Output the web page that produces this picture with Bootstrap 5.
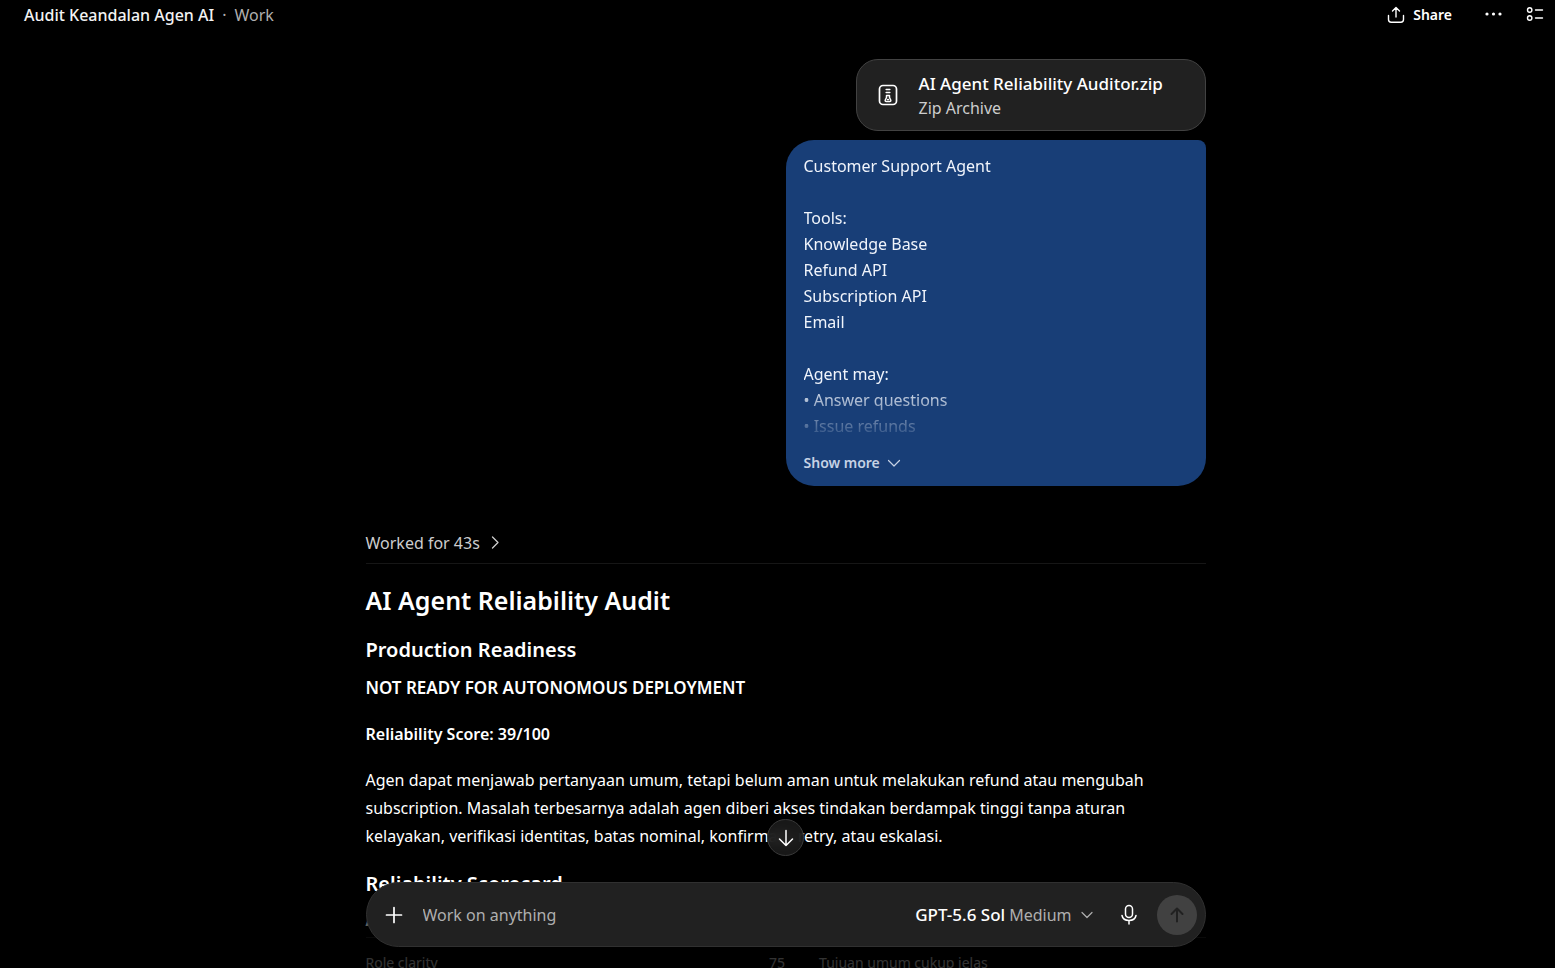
<!DOCTYPE html>
<html lang="id" data-bs-theme="dark">
<head>
<meta charset="utf-8">
<meta name="viewport" content="width=device-width, initial-scale=1">
<title>Audit Keandalan Agen AI</title>
<link href="https://cdn.jsdelivr.net/npm/bootstrap@5.3.0/dist/css/bootstrap.min.css" rel="stylesheet">
<style>
  body { background: #000; color: #fff; font-family: "Noto Sans", "Open Sans", sans-serif; font-size: 16px; line-height: 26px; }
  svg { display: block; flex: none; fill: none; stroke: currentColor; stroke-linecap: round; stroke-linejoin: round; }
  button { color: inherit; }
  .plain { background: none; border: 0; padding: 0; color: inherit; }
  .dots { fill: currentColor; stroke: none; }
  .topbar { height: 30px; padding: 0 11px 0 24px; }
  .chat-title { font-weight: 500; color: #f3f3f3; }
  .muted { color: #afafaf; }
  .share { font-size: 14px; font-weight: 600; }
  .thread { width: 100%; max-width: 840px; padding-top: 29px; }
  .stage { padding-left: 16px; }
  .file-card { width: 350px; height: 72px; background: #212121; border: 1px solid #424242; border-radius: 22px; padding: 2px 19px 0; gap: 19px; line-height: 25px; }
  .file-name { font-size: 17px; font-weight: 500; }
  .file-kind { color: #cdcdcd; }
  .bubble { background: #183e77; color: #f0f4fb; border-radius: 28px 8px 28px 28px; padding: 13px 18px 10px; margin-top: 9px; }
  .bubble-text { height: 286px; overflow: hidden; white-space: pre-line; -webkit-mask-image: linear-gradient(#000 230px, transparent 290px); mask-image: linear-gradient(#000 230px, transparent 290px); }
  .more { font-size: 14px; font-weight: 600; color: #c6d2e5; margin-top: 11px; gap: 6px; }
  .worked { margin-top: 44px; padding-bottom: 7px; border-bottom: 1px solid #161616; color: #cdcdcd; }
  .worked button { gap: 6px; }
  .answer h1 { font-size: 25px; line-height: 32px; font-weight: 600; margin: 20px 0 0; }
  .answer h2 { font-size: 20px; line-height: 28px; font-weight: 600; margin: 20px 0 0; }
  .answer p { line-height: 28px; margin: 10px 0 18px; }
  .answer p + p { margin-top: 0; }
  .answer .verdict { font-size: 17px; font-weight: 600; }
  .score-line { font-weight: 600; }
  .score-table { font-size: 14px; line-height: 20px; margin-top: 13px; table-layout: fixed; }
  .score-table th, .score-table td { border-bottom: 1px solid #303030; }
  .score-table th { padding: 0 0 6px; }
  .score-table td { padding: 15px 0 6px; }
  .score-table .num { text-align: right; padding-right: 34px; }
  .fade-out { height: 70px; background: linear-gradient(transparent, rgba(0,0,0,.8) 50%); }
  .dock { left: 16px; bottom: 21px; }
  .dock-inner { width: 100%; max-width: 840px; }
  .jump { width: 37px; height: 37px; border-radius: 50%; border: 1px solid #393939; background: rgba(28,28,28,.85); backdrop-filter: blur(6px); padding: 0; }
  .composer { height: 65px; margin-top: 26px; background: #212121; border: 1px solid #303030; border-radius: 33px; padding: 0 8px 0 17px; }
  .composer input { background: none; border: 0; outline: 0; color: #fff; padding: 0; margin-left: 19px; min-width: 0; }
  .composer input::placeholder { color: #afafaf; opacity: 1; }
  .model { font-size: 17px; font-weight: 500; }
  .send { width: 40px; height: 40px; border-radius: 50%; background: #414141; color: #212121; border: 0; padding: 0; margin-left: 17px; }
</style>
</head>
<body>
<div class="vh-100 overflow-hidden position-relative">
  <header class="topbar d-flex align-items-center justify-content-between">
    <div class="d-flex gap-2"><span class="chat-title">Audit Keandalan Agen AI</span><span class="muted">·</span><span class="muted">Work</span></div>
    <div class="d-flex align-items-center">
      <button class="plain share d-flex align-items-center gap-2" type="button">
        <svg width="18" height="18" viewBox="0 0 18 18" stroke-width="1.4"><path d="M9 11V1.500M5.500 5 9 1.500 12.500 5M1.500 9.500v4c0 1.700 1 2.700 2.700 2.700h9.600c1.700 0 2.700-1 2.700-2.700v-4"/></svg>
        Share
      </button>
      <button class="plain ms-4 me-3 px-2" type="button" aria-label="More options">
        <svg class="dots" width="18" height="18" viewBox="0 0 18 18"><circle cx="3" cy="8" r="1.600"/><circle cx="9.500" cy="8" r="1.600"/><circle cx="16" cy="8" r="1.600"/></svg>
      </button>
      <button class="plain" type="button" aria-label="Outline">
        <svg width="18" height="18" viewBox="0 0 18 18" stroke-width="1.400"><circle cx="3.700" cy="4" r="2.200"/><circle cx="3.700" cy="12" r="2.200"/><path d="M9.500 4h7M9.500 12h7"/></svg>
      </button>
    </div>
  </header>

  <main class="stage">
    <div class="thread mx-auto">
      <section class="d-flex flex-column align-items-end">
        <div class="file-card d-flex align-items-center">
          <svg width="24" height="24" viewBox="0 0 24 24" stroke-width="1.700"><rect x="3.500" y="1.500" width="17" height="19" rx="3.500"/><path d="M10.200 5.500h3.600M10.200 8.500h3.600" stroke-width="1.600"/><path d="M10.500 11.500h3v2l1.200 2.500c.4.900-.1 1.500-.9 1.500h-3.600c-.8 0-1.300-.6-.9-1.500l1.200-2.500zM11.600 15.500h.8" stroke-width="1.500"/></svg>
          <div>
            <div class="file-name">AI Agent Reliability Auditor.zip</div>
            <div class="file-kind">Zip Archive</div>
          </div>
        </div>
        <div class="bubble w-50">
          <div class="bubble-text">Customer Support Agent

Tools:
Knowledge Base
Refund API
Subscription API
Email

Agent may:
• Answer questions
• Issue refunds</div>
          <button class="plain more d-flex align-items-center" type="button">Show more
            <svg width="16" height="16" viewBox="0 0 16 16" stroke-width="1.200"><path d="m2.500 5.500 5.500 5.500 5.500-5.500"/></svg>
          </button>
        </div>
      </section>

      <div class="worked">
        <button class="plain d-flex align-items-center" type="button">Worked for 43s
          <svg width="16" height="16" viewBox="0 0 16 16" stroke-width="1.300"><path d="m6.500 2 5.500 5.500L6.500 13"/></svg>
        </button>
      </div>

      <article class="answer">
        <h1>AI Agent Reliability Audit</h1>
        <h2>Production Readiness</h2>
        <p class="verdict">NOT READY FOR AUTONOMOUS DEPLOYMENT</p>
        <p class="score-line">Reliability Score: 39/100</p>
        <p>Agen dapat menjawab pertanyaan umum, tetapi belum aman untuk melakukan refund atau mengubah subscription. Masalah terbesarnya adalah agen diberi akses tindakan berdampak tinggi tanpa aturan kelayakan, verifikasi identitas, batas nominal, konfirmasi, retry, atau eskalasi.</p>
        <h2>Reliability Scorecard</h2>
        <table class="score-table w-100">
          <colgroup><col style="width:40%"><col style="width:14%"><col></colgroup>
          <thead><tr><th>Area</th><th class="num">Skor</th><th>Temuan</th></tr></thead>
          <tbody><tr><td>Role clarity</td><td class="num">75</td><td>Tujuan umum cukup jelas</td></tr></tbody>
        </table>
      </article>
    </div>
  </main>

  <div class="fade-out position-absolute bottom-0 start-0 end-0"></div>
  <div class="dock position-absolute end-0">
    <div class="dock-inner mx-auto">
      <button class="jump d-flex align-items-center justify-content-center mx-auto" type="button" aria-label="Scroll to bottom">
        <svg width="20" height="20" viewBox="0 0 20 20" stroke-width="1.500"><path d="M10 2.500v15M3.500 11l6.500 6.500 6.500-6.500"/></svg>
      </button>
      <form class="composer d-flex align-items-center">
        <button class="plain" type="button" aria-label="Add"><svg width="20" height="20" viewBox="0 0 20 20" stroke-width="1.700"><path d="M10 2.500v15M2.500 10h15"/></svg></button>
        <input class="flex-grow-1" type="text" placeholder="Work on anything" aria-label="Message">
        <button class="plain d-flex align-items-center" type="button"><span class="model">GPT-5.6 Sol</span><span class="muted ms-1">Medium</span>
          <svg class="muted ms-2" width="14" height="14" viewBox="0 0 14 14" stroke-width="1.200"><path d="m2 4.500 5 5 5-5"/></svg>
        </button>
        <button class="plain ms-4" type="button" aria-label="Dictate"><svg width="22" height="22" viewBox="0 0 22 22" stroke-width="1.500"><rect x="7.500" y="1.500" width="7" height="12" rx="3.500"/><path d="M4 11.500c.6 3 3.500 5 7 5s6.400-2 7-5M11 16.500v3.500"/></svg></button>
        <button class="send d-flex align-items-center justify-content-center" type="submit" aria-label="Send"><svg width="20" height="20" viewBox="0 0 20 20" stroke-width="2"><path d="M10 16.500v-13M4.500 9 10 3.500 15.500 9"/></svg></button>
      </form>
    </div>
  </div>
</div>
<script src="https://cdn.jsdelivr.net/npm/bootstrap@5.3.0/dist/js/bootstrap.bundle.min.js"></script>
</body>
</html>
